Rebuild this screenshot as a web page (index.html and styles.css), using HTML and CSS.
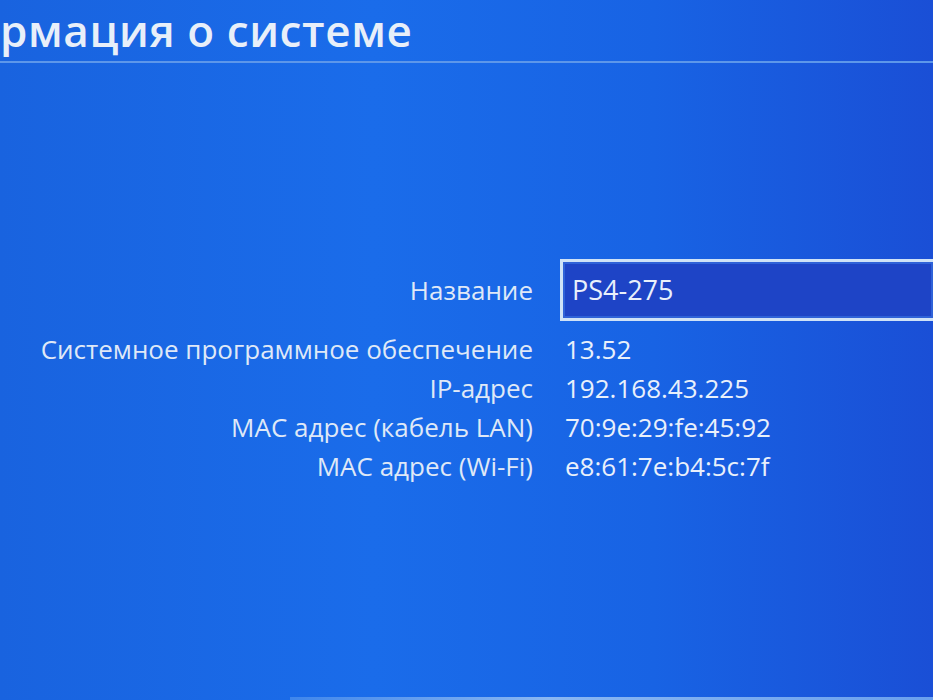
FILE: index.html
```html
<!DOCTYPE html>
<html lang="ru">
  <head>
    <meta charset="UTF-8" />
    <meta name="viewport" content="width=device-width, initial-scale=1.0" />
    <title>Информация о системе</title>
    <link rel="stylesheet" href="styles.css">
  </head>
  <body>
    <header class="title-bar">
      <h1>рмация о системе</h1>
    </header>

    <main class="info">
      <div class="info-label">Название</div>
      <div class="name-field">PS4-275</div>

      <div class="info-label">Системное программное обеспечение</div>
      <div class="info-value">13.52</div>

      <div class="info-label">IP-адрес</div>
      <div class="info-value">192.168.43.225</div>

      <div class="info-label">MAC адрес (кабель LAN)</div>
      <div class="info-value">70:9e:29:fe:45:92</div>

      <div class="info-label">MAC адрес (Wi-Fi)</div>
      <div class="info-value">e8:61:7e:b4:5c:7f</div>
    </main>

    <footer class="bottom-bar"></footer>
  </body>
</html>
```

FILE: styles.css
```css
html,
body {
  height: 100%;
}

body {
  margin: 0;
  font-family: "Open Sans", "Noto Sans", sans-serif;
  color: #e9f0fb;
  background: linear-gradient(90deg, #1963df 0%, #1a6cea 40%, #1863e4 70%, #1a4fd6 100%);
  display: flex;
  flex-direction: column;
  overflow: hidden;
}

/* page title under a thin rule */
.title-bar {
  height: 61px;
  border-bottom: 2px solid #5d97ea;
}

.title-bar h1 {
  margin: 0;
  font-size: 44px;
  font-weight: 600;
  letter-spacing: 0.6px;
  line-height: 60px;
  white-space: nowrap;
  color: #e8eff9;
}

/* label / value table */
.info {
  flex: 1;
  display: grid;
  grid-template-columns: 533px 1fr;
  grid-template-rows: 70px;
  grid-auto-rows: 39px;
  column-gap: 27px;
  align-items: center;
  padding-top: 196px;
  font-size: 26px;
}

.info-label {
  text-align: right;
  color: #dfe8f7;
  white-space: nowrap;
}

.info-value {
  padding-left: 5px;
  white-space: nowrap;
}

.info-label:first-child {
  height: 62px;
  line-height: 62px;
}

.name-field {
  height: 56px;
  line-height: 56px;
  padding-left: 9px;
  font-size: 27px;
  border: 3px solid #cfe2f7;
  border-right: none;
  background: #1e44c6;
  box-shadow: inset 0 0 0 2px #2f62d8;
}

.info-label:first-child,
.name-field {
  grid-row: 1;
  align-self: start;
}

.bottom-bar {
  height: 3px;
  margin-left: 290px;
  background: linear-gradient(90deg, #3f86ec, #8ab7f2 40%, #6aa0ee);
}
```
